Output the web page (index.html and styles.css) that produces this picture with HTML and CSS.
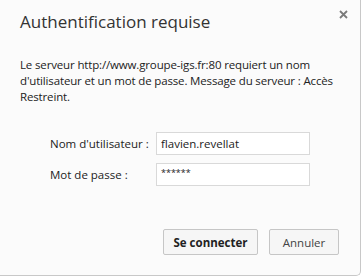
FILE: index.html
```html
<!DOCTYPE html>
<html lang="fr">
<head>
    <meta charset="UTF-8">
    <title>Authentification requise</title>
    <link rel="stylesheet" href="styles.css">
</head>
<body>

    <div class="dialog">
        <div class="dialog-header">
            <h1>Authentification requise</h1>
            <svg class="close" width="9" height="9" viewBox="0 0 9 9">
                <path d="M1 1 L8 8 M8 1 L1 8" stroke="#7a7a7a" stroke-width="1.8" fill="none"/>
            </svg>
        </div>

        <!-- Message du serveur -->
        <p class="message">Le serveur http://www.groupe-igs.fr:80 requiert un nom<br>d'utilisateur et un mot de passe. Message du serveur : Accès<br>Restreint.</p>

        <!-- Identifiants -->
        <div class="fields">
            <div class="field">
                <label for="user">Nom d'utilisateur :</label>
                <input type="text" id="user" value="flavien.revellat">
            </div>
            <div class="field">
                <label for="pass">Mot de passe :</label>
                <input type="text" id="pass" class="password" value="******">
            </div>
        </div>

        <div class="actions">
            <button class="btn btn-primary">Se connecter</button>
            <button class="btn">Annuler</button>
        </div>
    </div>

</body>
</html>
```

FILE: styles.css
```css
body {
    margin: 0;
    background-color: #fff;
    font-family: "Open Sans", sans-serif;
    color: #222;
}

.dialog {
    width: 361px;
    height: 276px;
    box-sizing: border-box;
    background-color: #fbfbfb;
    border-right: 1px solid #c8c8c8;
    border-bottom: 1px solid #c8c8c8;
    border-bottom-right-radius: 5px;
    padding: 0 20px;
}

.dialog-header {
    display: flex;
    justify-content: space-between;
    align-items: flex-start;
    padding-top: 10px;
}

.dialog-header h1 {
    margin: 0;
    font-size: 17px;
    font-weight: normal;
    color: #333;
}

.close {
    margin-right: -8px;
    margin-top: 0;
}

.message {
    margin: 24px -20px 0 0;
    font-size: 11.5px;
    line-height: 16px;
    letter-spacing: -0.15px;
    white-space: nowrap;
}

.fields {
    margin-top: 27px;
    padding-left: 30px;
}

.field {
    display: flex;
    align-items: center;
    margin-bottom: 8px;
}

.field label {
    width: 106px;
    font-size: 11.5px;
}

.field input {
    width: 154px;
    height: 23px;
    box-sizing: border-box;
    border: 1px solid #d9d9d9;
    padding: 0 4px;
    font-family: "Open Sans", sans-serif;
    font-size: 11.5px;
    color: #222;
    background-color: #fff;
}

.field input.password {
    font-size: 9px;
    padding-bottom: 5px;
}

.actions {
    display: flex;
    justify-content: flex-end;
    gap: 11px;
    margin-top: 43px;
    margin-right: 1px;
}

.btn {
    width: 70px;
    height: 26px;
    box-sizing: border-box;
    border: 1px solid #c6c6c6;
    border-radius: 2px;
    background-color: #f6f6f6;
    font-family: "Open Sans", sans-serif;
    font-size: 11.5px;
    color: #444;
    padding: 0;
    white-space: nowrap;
}

.btn-primary {
    width: 95px;
    font-weight: bold;
    color: #222;
}
```
